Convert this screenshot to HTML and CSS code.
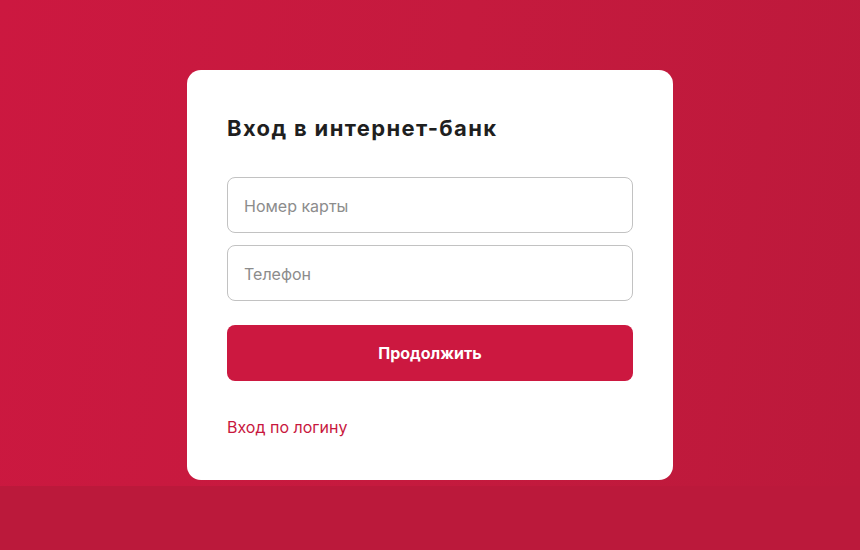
FILE: index.html
```html
<!DOCTYPE html>
<html lang="ru">
<head>
<meta charset="utf-8">
<title>Вход в интернет-банк</title>
<link rel="stylesheet" href="styles.css">
</head>
<body>
<section class="hero">
  <form class="card">
    <h1 class="title">Вход в интернет-банк</h1>
    <div class="fields">
      <input class="field" type="text" placeholder="Номер карты">
      <input class="field" type="text" placeholder="Телефон">
    </div>
    <button class="submit" type="button">Продолжить</button>
    <a class="alt-link" href="#">Вход по логину</a>
  </form>
</section>
</body>
</html>
```
FILE: styles.css
```css
* { box-sizing: border-box; }
html, body { margin: 0; padding: 0; }
body {
  background: #bb193b;
  font-family: Inter, "Noto Sans", sans-serif;
  min-height: 550px;
}
.hero {
  height: 486px;
  background: linear-gradient(100deg, #cc1840 0%, #c51a3e 50%, #bc193b 100%);
  display: flex;
  justify-content: center;
  padding-top: 70px;
}
.card {
  width: 486px;
  height: 410px;
  background: #fff;
  border-radius: 14px;
  padding: 40px 40px 0;
  display: flex;
  flex-direction: column;
}
.title {
  margin: 0;
  font-size: 22px;
  font-weight: 700;
  line-height: 36px;
  color: #1f1f1f;
  letter-spacing: 1.35px;
}
.fields {
  margin-top: 31px;
  display: flex;
  flex-direction: column;
  gap: 12px;
}
.field {
  height: 56px;
  width: 100%;
  border: 1px solid #c2c2c2;
  border-radius: 8px;
  padding: 2px 16px 0;
  font: inherit;
  font-size: 16px;
  color: #222;
  outline: none;
}
.field::placeholder { color: #8c8c8c; }
.submit {
  margin-top: 24px;
  height: 56px;
  border: 0;
  border-radius: 8px;
  background: #cc1840;
  color: #fff;
  font: inherit;
  font-size: 16px;
  font-weight: 700;
  cursor: pointer;
}
.alt-link {
  margin-top: 34px;
  align-self: flex-start;
  color: #c8173e;
  font-size: 16px;
  line-height: 24px;
  text-decoration: none;
}
```
